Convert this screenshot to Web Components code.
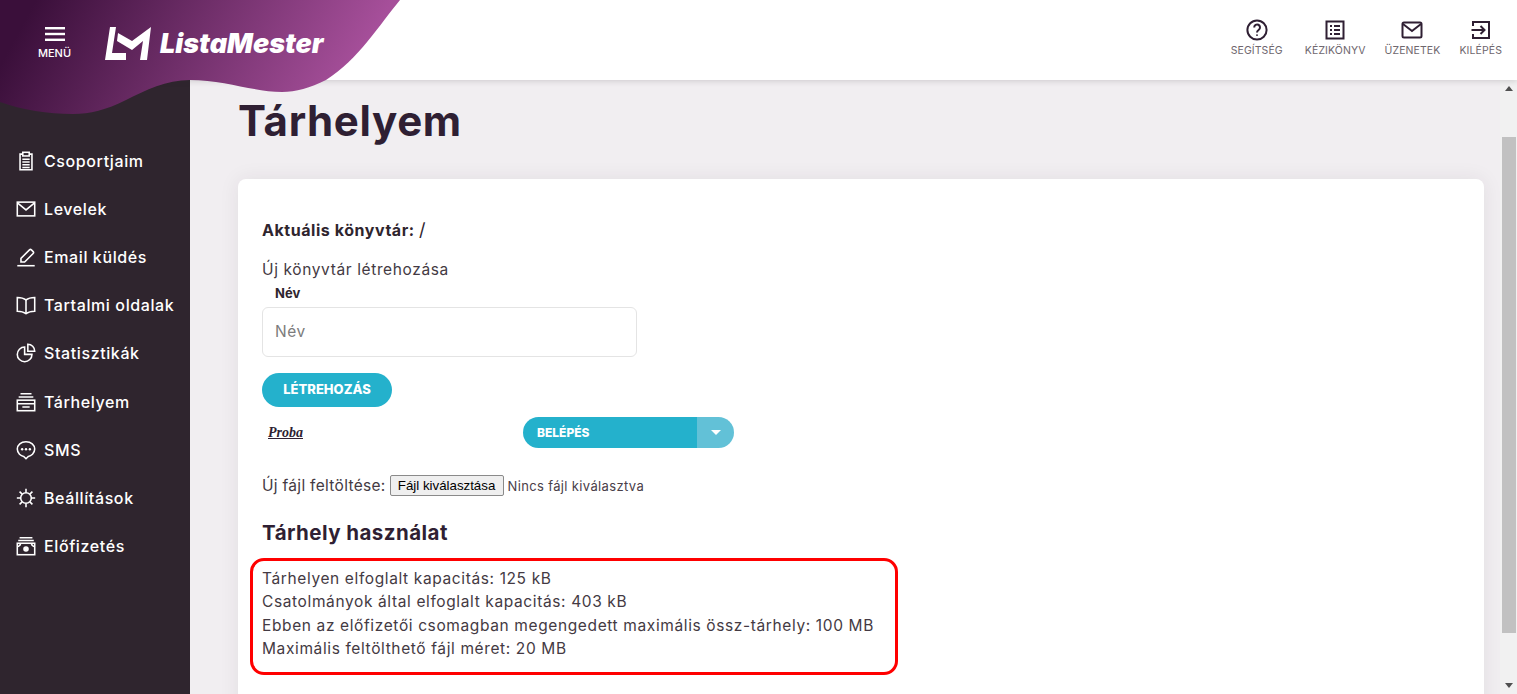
<!DOCTYPE html>
<html lang="hu">
<head>
<meta charset="utf-8">
<title>ListaMester</title>
<style>
	html, body { margin: 0; height: 100%; overflow: hidden; }
	body { font-family: Inter, "Open Sans", sans-serif; color: #2f252e; }
	lm-action:first-child { margin-right: 3px; }
</style>
</head>
<body>
<lm-app>
	<lm-header slot="header">
		<lm-action icon="help">SEGÍTSÉG</lm-action>
		<lm-action icon="manual">KÉZIKÖNYV</lm-action>
		<lm-action icon="mail">ÜZENETEK</lm-action>
		<lm-action icon="exit">KILÉPÉS</lm-action>
	</lm-header>
	<lm-sidebar slot="sidebar">
		<lm-nav-item icon="clipboard">Csoportjaim</lm-nav-item>
		<lm-nav-item icon="envelope">Levelek</lm-nav-item>
		<lm-nav-item icon="pen">Email küldés</lm-nav-item>
		<lm-nav-item icon="book">Tartalmi oldalak</lm-nav-item>
		<lm-nav-item icon="pie">Statisztikák</lm-nav-item>
		<lm-nav-item icon="archive">Tárhelyem</lm-nav-item>
		<lm-nav-item icon="sms">SMS</lm-nav-item>
		<lm-nav-item icon="gear">Beállítások</lm-nav-item>
		<lm-nav-item icon="money">Előfizetés</lm-nav-item>
	</lm-sidebar>
	<lm-storage-page></lm-storage-page>
</lm-app>

<script>
const ICONS = {
	help: '<circle cx="12" cy="12" r="9.6"/><path d="M9.2 9.4a2.9 2.9 0 1 1 4.6 2.3c-1.1.8-1.8 1.4-1.8 2.8"/><path d="M12 16.6v1.2"/>',
	manual: '<rect x="3.5" y="3.5" width="17" height="17"/><path d="M7 8h2M11 8h6M7 12h2M11 12h6M7 16h2M11 16h6"/>',
	mail: '<rect x="2.5" y="4.5" width="19" height="15" rx="1.5"/><path d="M3 6l9 7 9-7"/>',
	exit: '<path d="M4 8V4h16v16H4v-4"/><path d="M2.5 12H15M11.5 8l4 4-4 4"/>',
	clipboard: '<path d="M8.5 4.5H5.5v17h13v-17h-3"/><rect x="8.5" y="2.5" width="7" height="4"/><path d="M8 10h8M8 13h8M8 16h8M8 19h8"/>',
	envelope: '<rect x="2.5" y="4.5" width="19" height="15"/><path d="M3 5.5l9 7.5 9-7.5"/>',
	pen: '<path d="M2.5 21.5h19"/><path d="M6.5 17.5v-4L15.8 4.2a1.5 1.5 0 0 1 2.1 0l1.9 1.9a1.5 1.5 0 0 1 0 2.1l-9.3 9.3z"/>',
	book: '<path d="M12 6.5C9.5 4.5 6 3.8 2.5 3.8v15c3.5 0 7 .8 9.5 2.7 2.5-1.9 6-2.7 9.5-2.7v-15C18 3.8 14.5 4.5 12 6.5z"/><path d="M12 6.5v15"/>',
	pie: '<path d="M10.5 5.5a8 8 0 1 0 8 8h-8z"/><path d="M14 2.5a7.5 7.5 0 0 1 7.5 7.5H14z"/>',
	archive: '<path d="M6 3h12M4 6.5h16"/><rect x="2.5" y="10" width="19" height="11.5"/><path d="M2.5 14h19M8 17.5h8"/>',
	sms: '<path d="M12 3c5.5 0 9.5 3.3 9.5 8s-4 7.5-7 8l-2.5 2.5-2.5-2.5c-3-.5-7-3.3-7-8s4-8 9.500-8z"/><g fill="currentColor" stroke="none"><circle cx="7.8" cy="11.2" r="1.3"/><circle cx="12" cy="11.2" r="1.3"/><circle cx="16.2" cy="11.2" r="1.3"/></g>',
	gear: '<circle cx="12" cy="12" r="5.8"/><path d="M12 2v4M12 18v4M2 12h4M18 12h4M5 5l2.8 2.8M16.2 16.2L19 19M19 5l-2.8 2.8M7.8 16.2L5 19"/>',
	money: '<path d="M5 3h14M3.5 6h17"/><rect x="2.5" y="9" width="19" height="12.5"/><circle cx="12" cy="15.2" r="2.2" fill="currentColor"/><path d="M2.5 12.5c1.8 0 3-.8 3.5-2.8M21.5 12.5c-1.8 0-3-.8-3.5-2.8"/>',
};

function iconSvg(name, size, stroke) {
	return `<svg width="${size}" height="${size}" viewBox="0 0 24 24" fill="none" stroke="currentColor" stroke-width="${stroke}">${ICONS[name]}</svg>`;
}

class LmApp extends HTMLElement {
	constructor() {
		super();
		this.attachShadow({ mode: 'open' });
		this.shadowRoot.innerHTML = `
			<style>
				:host {
					display: grid;
					grid-template-columns: 190px 1fr 17px;
					grid-template-rows: 80px 1fr;
					height: 694px;
					background: #f1eef1;
					overflow: hidden;
				}
				.head { grid-column: 1 / -1; position: relative; z-index: 2; }
				.main { overflow: hidden; }
				.track {
					display: flex;
					flex-direction: column;
					background: #f1f1f1;
				}
				.arrow { height: 17px; display: flex; align-items: center; justify-content: center; }
				.arrow i { border: 4px solid transparent; border-top: 0; border-bottom: 5px solid #505050; width: 0; height: 0; }
				.arrow.down i { border-bottom: 0; border-top: 5px solid #505050; }
				.gap-top { height: 40px; }
				.thumb { height: 496px; background: #c1c1c1; margin: 0 1px 0 2px; }
				.gap-bottom { flex: 1; }
			</style>
			<div class="head"><slot name="header"></slot></div>
			<slot name="sidebar"></slot>
			<div class="main"><slot></slot></div>
			<div class="track">
				<div class="arrow"><i></i></div>
				<div class="gap-top"></div>
				<div class="thumb"></div>
				<div class="gap-bottom"></div>
				<div class="arrow down"><i></i></div>
			</div>
		`;
	}
}

class LmHeader extends HTMLElement {
	constructor() {
		super();
		this.attachShadow({ mode: 'open' });
		this.shadowRoot.innerHTML = `
			<style>
				:host {
					display: flex;
					justify-content: flex-end;
					height: 80px;
					background: #fff;
					box-shadow: 0 1px 6px rgba(47, 37, 46, .18);
					padding-right: 15px;
					box-sizing: border-box;
				}
				.blob { position: absolute; left: 0; top: 0; }
				.burger {
					position: absolute;
					left: 38px;
					top: 27px;
					width: 33px;
					display: flex;
					flex-direction: column;
					align-items: center;
					color: #fff;
					font: 500 11px/13px Inter, sans-serif;
				}
				.burger svg { display: block; margin-bottom: 6px; }
				.logo-text {
					position: absolute;
					left: 160px;
					top: 26px;
					font: italic 900 27px/36px Inter, sans-serif;
					color: #fff;
				}
				.actions { display: flex; gap: 19px; padding-top: 18px; }
			</style>
			<svg class="blob" width="410" height="118" viewBox="0 0 410 118">
				<defs>
					<linearGradient id="blob" gradientUnits="userSpaceOnUse" x1="25" y1="20" x2="300" y2="170">
						<stop offset="0" stop-color="#3a0f3a"/>
						<stop offset="1" stop-color="#a64f9a"/>
					</linearGradient>
				</defs>
				<path fill="url(#blob)" d="M0 0H400C380 24 358 60 326 80C310 88 296 92 282 92C254 92 224 80 190 80C166 80 146 90 126 100C106 110 90 114 73 114C48 114 22 110 0 102Z"/>
				<path fill="#fff" d="M110 27H116L112 53H126V60H105Z"/>
				<path fill="#fff" d="M118 33L132 41 151 27 147 60H140L143 41 132 50 117 41Z"/>
			</svg>
			<div class="burger">
				<svg width="20" height="14" viewBox="0 0 20 14" fill="#fff"><rect width="20" height="2.4"/><rect y="5.8" width="20" height="2.4"/><rect y="11.6" width="20" height="2.4"/></svg>
				<span>MENÜ</span>
			</div>
			<div class="logo-text">ListaMester</div>
			<div class="actions"><slot></slot></div>
		`;
	}
}

class LmAction extends HTMLElement {
	constructor() {
		super();
		this.attachShadow({ mode: 'open' });
		this.shadowRoot.innerHTML = `
			<style>
				:host {
					display: flex;
					flex-direction: column;
					align-items: center;
					font: 400 10.5px/14px Inter, sans-serif;
					letter-spacing: .1px;
					color: #6e666d;
				}
				svg { color: #2f1f33; display: block; margin-bottom: 2px; }
			</style>
			${iconSvg(this.getAttribute('icon'), 24, 2)}
			<slot></slot>
		`;
	}
}

class LmSidebar extends HTMLElement {
	constructor() {
		super();
		this.attachShadow({ mode: 'open' });
		this.shadowRoot.innerHTML = `
			<style>
				:host {
					display: flex;
					flex-direction: column;
					background: #2f252e;
					padding-top: 57px;
				}
			</style>
			<slot></slot>
		`;
	}
}

class LmNavItem extends HTMLElement {
	constructor() {
		super();
		this.attachShadow({ mode: 'open' });
		this.shadowRoot.innerHTML = `
			<style>
				:host {
					display: flex;
					align-items: center;
					gap: 7px;
					height: 48.1px;
					padding-left: 15px;
					color: #fff;
					font: 500 16px Inter, sans-serif;
					letter-spacing: .6px;
				}
				svg { flex: none; }
			</style>
			${iconSvg(this.getAttribute('icon'), 22, 1.7)}
			<span><slot></slot></span>
		`;
	}
}

class LmButton extends HTMLElement {
	constructor() {
		super();
		this.attachShadow({ mode: 'open' });
		this.shadowRoot.innerHTML = `
			<style>
				:host {
					display: inline-flex;
					align-items: center;
					justify-content: center;
					width: 130px;
					height: 34px;
					box-sizing: border-box;
					padding-bottom: 3px;
					border-radius: 17px;
					background: #24b1cc;
					color: #fff;
					font: 800 13px Inter, sans-serif;
				}
			</style>
			<slot></slot>
		`;
	}
}

class LmSplitButton extends HTMLElement {
	constructor() {
		super();
		this.attachShadow({ mode: 'open' });
		this.shadowRoot.innerHTML = `
			<style>
				:host {
					display: flex;
					width: 211px;
					height: 31px;
					border-radius: 16px;
					overflow: hidden;
					color: #fff;
					font: 800 12px Inter, sans-serif;
				}
				.label {
					flex: 1;
					display: flex;
					align-items: center;
					padding-left: 14px;
					background: #24b1cc;
				}
				.caret {
					width: 37px;
					display: flex;
					align-items: center;
					justify-content: center;
					background: #62c1d7;
				}
				.caret i { border: 5px solid transparent; border-bottom: 0; border-top: 5px solid #fff; }
			</style>
			<div class="label"><slot></slot></div>
			<div class="caret"><i></i></div>
		`;
	}
}

class LmStoragePage extends HTMLElement {
	constructor() {
		super();
		this.attachShadow({ mode: 'open' });
		this.shadowRoot.innerHTML = `
			<style>
				:host {
					display: block;
					padding: 0 16px 0 48px;
					font: 400 15.5px Inter, sans-serif;
					letter-spacing: .62px;
					color: #443a43;
				}
				h1 {
					margin: 0;
					height: 99px;
					box-sizing: border-box;
					padding-top: 13px;
					font: 700 42px/56px Inter, sans-serif;
					letter-spacing: .65px;
					color: #2f1f33;
				}
				.card {
					background: #fff;
					border-radius: 8px;
					box-shadow: 0 0 20px rgba(47, 37, 46, .08);
					padding: 40px 24px 60px;
					height: 600px;
					box-sizing: border-box;
				}
				.current {
					font: 700 16px/22px Inter, sans-serif;
					letter-spacing: .55px;
					color: #2f252e;
				}
				.current span { font-weight: 400; font-size: 18px; }
				.new-dir { margin-top: 18px; line-height: 22px; }
				label {
					display: block;
					margin: 3px 0 5px 13px;
					font: 700 13px/18px Inter, sans-serif;
					letter-spacing: 0;
					color: #2f252e;
				}
				input {
					display: block;
					width: 375px;
					height: 50px;
					box-sizing: border-box;
					padding: 0 12px 2px;
					border: 1px solid #e4e4e4;
					border-radius: 6px;
					outline: none;
					font: 400 15.5px Inter, sans-serif;
					letter-spacing: .5px;
				}
				input::placeholder { color: #7c7c7c; }
				lm-button { margin-top: 16px; letter-spacing: 0; }
				.entry {
					display: grid;
					grid-template-columns: 261px 211px;
					align-items: center;
					margin-top: 10px;
					letter-spacing: 0;
				}
				.entry a {
					padding-left: 6px;
					font: italic 700 14px "Liberation Serif", serif;
					color: #2f1f33;
					text-decoration: underline;
				}
				.upload {
					display: flex;
					align-items: center;
					gap: 4px;
					margin-top: 27px;
					height: 21px;
					letter-spacing: .3px;
				}
				button {
					width: 114px;
					height: 21px;
					padding: 0;
					border: 1px solid #8a8a8a;
					border-radius: 2px;
					background: #efefef;
					color: #000;
					font: 400 13.3px "Liberation Sans", sans-serif;
					letter-spacing: 0;
				}
				.none { font-size: 13px; letter-spacing: .35px; color: #4a4049; }
				h2 {
					margin: 23px 0 0;
					font: 700 20.5px/28px Inter, sans-serif;
					letter-spacing: .45px;
					color: #2f1f33;
				}
				.usage {
					margin: 11px 0 0 -12px;
					width: 648px;
					height: 117px;
					box-sizing: border-box;
					border: 3px solid #f00;
					border-radius: 14px;
					padding: 6px 9px;
					line-height: 23.4px;
				}
			</style>
			<h1>Tárhelyem</h1>
			<div class="card">
				<div class="current">Aktuális könyvtár: <span>/</span></div>
				<div class="new-dir">Új könyvtár létrehozása</div>
				<label for="dir">Név</label>
				<input id="dir" placeholder="Név">
				<lm-button>LÉTREHOZÁS</lm-button>
				<div class="entry">
					<a href="#">Proba</a>
					<lm-split-button>BELÉPÉS</lm-split-button>
				</div>
				<div class="upload">
					<span>Új fájl feltöltése:</span>
					<button type="button">Fájl kiválasztása</button>
					<span class="none">Nincs fájl kiválasztva</span>
				</div>
				<h2>Tárhely használat</h2>
				<div class="usage">
					<div>Tárhelyen elfoglalt kapacitás: 125 kB</div>
					<div>Csatolmányok által elfoglalt kapacitás: 403 kB</div>
					<div>Ebben az előfizetői csomagban megengedett maximális össz-tárhely: 100 MB</div>
					<div>Maximális feltölthető fájl méret: 20 MB</div>
				</div>
			</div>
		`;
	}
}

customElements.define('lm-app', LmApp);
customElements.define('lm-header', LmHeader);
customElements.define('lm-action', LmAction);
customElements.define('lm-sidebar', LmSidebar);
customElements.define('lm-nav-item', LmNavItem);
customElements.define('lm-button', LmButton);
customElements.define('lm-split-button', LmSplitButton);
customElements.define('lm-storage-page', LmStoragePage);
</script>
</body>
</html>
